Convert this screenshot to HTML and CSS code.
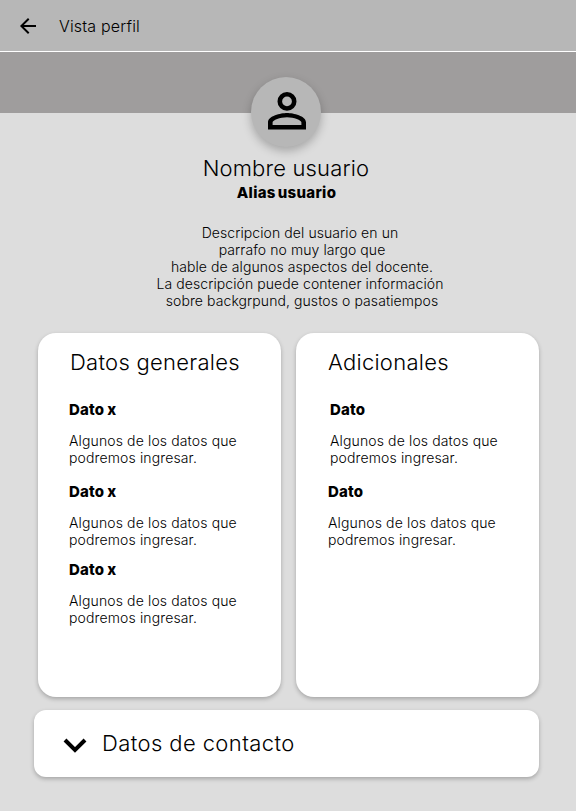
FILE: index.html
```html
<!DOCTYPE html>
<html lang="es">
<head>
<meta charset="utf-8">
<title>Vista perfil</title>
<link rel="stylesheet" href="styles.css">
</head>
<body>
<header class="topbar">
  <svg class="back" viewBox="0 0 16 16"><path d="M16 7H3.830l5.590-5.590L8 0 0 8l8 8 1.410-1.410L3.830 9H16z"/></svg>
  <span class="topbar-title">Vista perfil</span>
</header>
<div class="cover"></div>
<section class="profile">
  <div class="avatar">
    <svg viewBox="0 0 38 38" preserveAspectRatio="none"><path fill-rule="evenodd" d="M19 0a9.500 9.500 0 1 0 0 19a9.500 9.500 0 1 0 0-19zM19 4.600a4.900 4.900 0 1 1 0 9.800a4.900 4.900 0 1 1 0-9.800zM19 21.200c-6.300 0-19 3.100-19 9.400V38h38v-7.400c0-6.300-12.700-9.400-19-9.400zM4.600 33.500v-2.900c0-1.600 7.400-4.900 14.400-4.900s14.400 3.300 14.400 4.900v2.900z"/></svg>
  </div>
  <h1 class="title name">Nombre usuario</h1>
  <div class="label alias">Alias usuario</div>
  <p class="text description">Descripcion del usuario en un
 parrafo no muy largo que
 hable de algunos aspectos del docente.
La descripción puede contener información
 sobre backgrpund, gustos o pasatiempos</p>
</section>
<main class="cards">
  <section class="card general">
    <h2 class="title">Datos generales</h2>
    <div class="item"><h3 class="label">Dato x</h3><p class="text">Algunos de los datos que<br>podremos ingresar.</p></div>
    <div class="item"><h3 class="label">Dato x</h3><p class="text">Algunos de los datos que<br>podremos ingresar.</p></div>
    <div class="item compact"><h3 class="label">Dato x</h3><p class="text">Algunos de los datos que<br>podremos ingresar.</p></div>
  </section>
  <section class="card extra">
    <h2 class="title">Adicionales</h2>
    <div class="item indented"><h3 class="label">Dato</h3><p class="text">Algunos de los datos que<br>podremos ingresar.</p></div>
    <div class="item"><h3 class="label">Dato</h3><p class="text">Algunos de los datos que<br>podremos ingresar.</p></div>
  </section>
</main>
<section class="contact">
  <svg class="chevron" viewBox="0 0 24 15"><path d="M2 2l10 10L22 2" fill="none" stroke="#000" stroke-width="4"/></svg>
  <h2 class="title">Datos de contacto</h2>
</section>
</body>
</html>
```
FILE: styles.css
```css
* { box-sizing: border-box; }

body {
  margin: 0;
  height: 811px;
  overflow: hidden;
  background: #ddd;
  color: #000;
  font-family: Inter, sans-serif;
}

h1, h2, h3, p { margin: 0; }

.topbar {
  display: flex;
  align-items: center;
  height: 52px;
  padding-left: 20px;
  background: #b7b7b7;
  border-bottom: 1px solid #fff;
}

.back { width: 16px; height: 16px; }

.topbar-title {
  margin-left: 23px;
  font-size: 16px;
  font-weight: 300;
  line-height: 20px;
  letter-spacing: .18px;
}

.cover { height: 61px; background: #9f9d9d; }

.profile {
  display: flex;
  flex-direction: column;
  align-items: center;
  height: 256px;
  margin-top: -36px;
  padding-right: 4px;
}

.avatar {
  width: 70px;
  height: 70px;
  padding: 15px 15px 17px 17px;
  border-radius: 50%;
  background: #b7b7b7;
  box-shadow: 0 4px 10px rgba(0, 0, 0, .25);
}

.avatar svg { display: block; width: 38px; height: 37.5px; }

.title {
  font-size: 22px;
  font-weight: 300;
  line-height: 28px;
  letter-spacing: .27px;
  white-space: nowrap;
}

.name { margin-top: 7px; letter-spacing: .16px; }

.label {
  font-size: 15px;
  font-weight: 800;
  line-height: 18px;
  letter-spacing: .2px;
  word-spacing: -.6px;
}

.alias {
  margin: 2px 0 0 1px;
  letter-spacing: .3px;
  word-spacing: -1.5px;
}

.text {
  font-size: 14px;
  font-weight: 300;
  line-height: 17px;
  letter-spacing: .13px;
}

.description {
  margin: 22px 0 0 28px;
  text-align: center;
  white-space: pre;
  letter-spacing: .08px;
}

.cards {
  display: grid;
  grid-template-columns: 243px 243px;
  gap: 15px;
  height: 364px;
  padding: 0 37px 0 38px;
}

.card {
  padding: 15px 0 0 31px;
  border-radius: 18px;
  background: #fff;
  box-shadow: 0 2px 4px rgba(0, 0, 0, .25);
}

.general .title { margin-left: 1px; }
.extra { padding-left: 32px; }

.card .title { margin-bottom: 25px; }
.item { height: 82px; }
.item .text { margin-top: 13px; }
.item.compact { margin-top: -4px; }
.item.indented { padding-left: 2px; }

.contact {
  display: flex;
  align-items: center;
  height: 67px;
  margin: 13px 37px 0 34px;
  padding-left: 28.5px;
  border-radius: 12px;
  background: #fff;
  box-shadow: 0 2px 4px rgba(0, 0, 0, .25);
}

.chevron { width: 24px; height: 15px; margin: 3px 15.5px 0 0; }
.contact .title { margin-bottom: 2px; letter-spacing: .4px; }
```
